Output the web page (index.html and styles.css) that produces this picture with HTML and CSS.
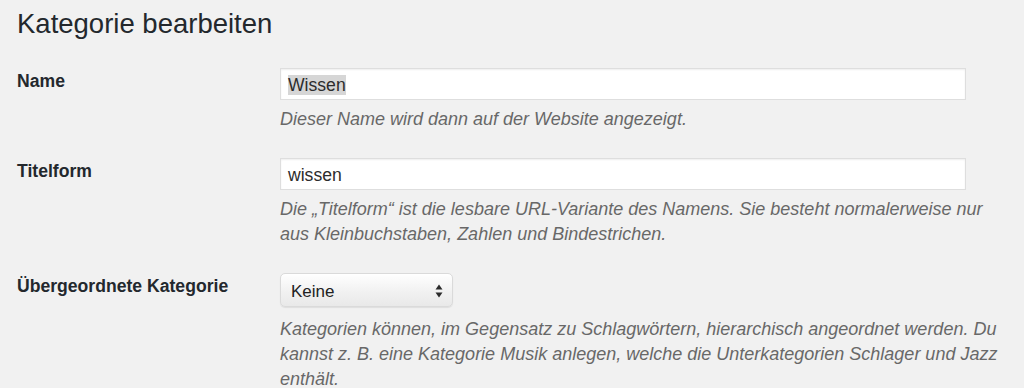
FILE: index.html
```html
<!DOCTYPE html>
<html lang="de">
<head>
<meta charset="utf-8">
<title>Kategorie bearbeiten</title>
<link rel="stylesheet" href="styles.css">
</head>
<body>
<div class="wrap">
  <h1 class="title">Kategorie bearbeiten</h1>
  <div class="form">
    <div class="row">
      <div class="label">Name</div>
      <div class="field">
        <div class="input"><span class="sel">Wissen</span></div>
        <p class="desc">Dieser Name wird dann auf der Website angezeigt.</p>
      </div>
    </div>
    <div class="row">
      <div class="label">Titelform</div>
      <div class="field">
        <div class="input">wissen</div>
        <p class="desc">Die „Titelform“ ist die lesbare URL-Variante des Namens. Sie besteht normalerweise nur aus Kleinbuchstaben, Zahlen und Bindestrichen.</p>
      </div>
    </div>
    <div class="row">
      <div class="label">Übergeordnete Kategorie</div>
      <div class="field">
        <div class="select">
          <span class="select-value">Keine</span>
          <svg class="arrows" width="8" height="14" viewBox="0 0 8 14" aria-hidden="true">
            <path d="M4 0.5 L7.5 5.5 L0.5 5.5 Z" fill="#2b2b2b"/>
            <path d="M4 13.5 L7.5 8.5 L0.5 8.5 Z" fill="#2b2b2b"/>
          </svg>
        </div>
        <p class="desc desc-select">Kategorien können, im Gegensatz zu Schlagwörtern, hierarchisch angeordnet werden. Du kannst z. B. eine Kategorie Musik anlegen, welche die Unterkategorien Schlager und Jazz enthält.</p>
      </div>
    </div>
  </div>
</div>
</body>
</html>
```

FILE: styles.css
```css
html, body {
  margin: 0;
  padding: 0;
  background: #f1f1f1;
}

body {
  font-family: "Liberation Sans", Arial, Helvetica, sans-serif;
  color: #23282d;
  overflow: hidden;
}

.wrap {
  padding: 0 17px;
}

.title {
  margin: 0;
  padding-top: 6px;
  font-size: 27.5px;
  font-weight: 400;
  line-height: 36px;
  color: #23282d;
}

.form {
  margin-top: 26px;
  display: flex;
  flex-direction: column;
  gap: 26px;
}

.row {
  display: grid;
  grid-template-columns: 263px 1fr;
}

.label {
  padding-top: 1px;
  font-size: 17.6px;
  font-weight: 700;
  line-height: 24px;
  color: #23282d;
}

.field {
  min-width: 0;
}

.input {
  box-sizing: border-box;
  width: 686px;
  height: 32px;
  padding: 3px 7px 0;
  background: #fff;
  border: 1px solid #dedede;
  box-shadow: inset 0 1px 2px rgba(0, 0, 0, 0.07);
  font-size: 17.6px;
  line-height: 27px;
  color: #2c2c2c;
}

.sel {
  background: #d6d6d6;
}

.desc {
  margin: 7px 0 0;
  font-size: 18px;
  font-style: italic;
  line-height: 25px;
  color: #686868;
}

.select {
  box-sizing: border-box;
  width: 173px;
  height: 34px;
  padding: 0 9px 0 10px;
  display: flex;
  align-items: center;
  justify-content: space-between;
  border: 1px solid #dadada;
  border-radius: 5px;
  background: linear-gradient(#ffffff, #f0f0f0 60%, #e9e9e9);
  box-shadow: 0 1px 1px rgba(0, 0, 0, 0.08), inset 0 1px 0 #fff;
  font-size: 17px;
  color: #222;
}

.select-value {
  line-height: 20px;
  padding-top: 3px;
}

.arrows {
  display: block;
  margin-top: 2px;
}

.desc-select {
  margin-top: 10px;
}
```
